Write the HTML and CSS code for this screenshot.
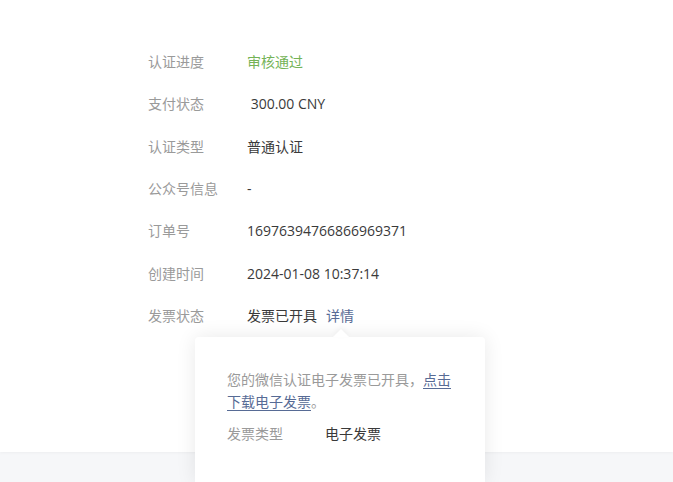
FILE: index.html
```html
<!DOCTYPE html>
<html lang="zh-CN">
<head>
    <meta charset="UTF-8">
    <title>认证详情</title>
    <link rel="stylesheet" href="styles.css">
</head>
<body>
    <div class="card">
        <div class="info-list">
            <div class="row">
                <span class="label">认证进度</span>
                <span class="value success">审核通过</span>
            </div>
            <div class="row">
                <span class="label">支付状态</span>
                <span class="value">&nbsp;300.00 CNY</span>
            </div>
            <div class="row">
                <span class="label">认证类型</span>
                <span class="value">普通认证</span>
            </div>
            <div class="row">
                <span class="label">公众号信息</span>
                <span class="value">-</span>
            </div>
            <div class="row">
                <span class="label">订单号</span>
                <span class="value">16976394766866969371</span>
            </div>
            <div class="row">
                <span class="label">创建时间</span>
                <span class="value">2024-01-08 10:37:14</span>
            </div>
            <div class="row">
                <span class="label">发票状态</span>
                <span class="value">发票已开具<a class="link detail" href="#">详情</a></span>
            </div>
        </div>
    </div>

    <div class="popover">
        <p class="popover-desc">您的微信认证电子发票已开具，<a class="link underline" href="#">点击下载电子发票</a>。</p>
        <div class="popover-row">
            <span class="popover-label">发票类型</span>
            <span class="popover-value">电子发票</span>
        </div>
    </div>
</body>
</html>
```

FILE: styles.css
```css
body {
    margin: 0;
    background: #f6f7f9;
    font-family: "Open Sans", "Noto Sans CJK SC", sans-serif;
    font-size: 14px;
    color: #353535;
    height: 482px;
    overflow: hidden;
    position: relative;
}

.card {
    background: #fff;
    height: 452px;
    box-shadow: 0 1px 3px rgba(0, 0, 0, 0.04);
}

.info-list {
    padding: 51px 0 0 148px;
    display: flex;
    flex-direction: column;
    gap: 20.33px;
}

.row {
    display: flex;
    line-height: 22px;
    height: 22px;
}

.label {
    width: 99px;
    color: #9a9a9a;
}

.value {
    color: #3a3a3a;
}

.success {
    color: #74b356;
}

.link {
    color: #576b95;
    text-decoration: none;
}

.detail {
    margin-left: 9px;
}

.underline {
    text-decoration: underline;
    text-underline-offset: 3px;
}

/* invoice popover */
.popover {
    position: absolute;
    left: 195px;
    top: 337px;
    width: 290px;
    height: 145px;
    box-sizing: border-box;
    padding: 32px 32px 0;
    background: #fff;
    border-radius: 4px 4px 0 0;
    box-shadow: 0 0 20px rgba(0, 0, 0, 0.09);
}

.popover::before {
    content: "";
    position: absolute;
    top: -8px;
    left: 138px;
    width: 0;
    height: 0;
    border-left: 8px solid transparent;
    border-right: 8px solid transparent;
    border-bottom: 8px solid #fff;
    filter: drop-shadow(0 -2px 2px rgba(0, 0, 0, 0.04));
}

.popover-desc {
    margin: 0;
    line-height: 22px;
    color: #9a9a9a;
}

.popover-row {
    display: flex;
    margin-top: 10px;
    line-height: 22px;
}

.popover-label {
    width: 98px;
    color: #9a9a9a;
}

.popover-value {
    color: #3a3a3a;
}
```
